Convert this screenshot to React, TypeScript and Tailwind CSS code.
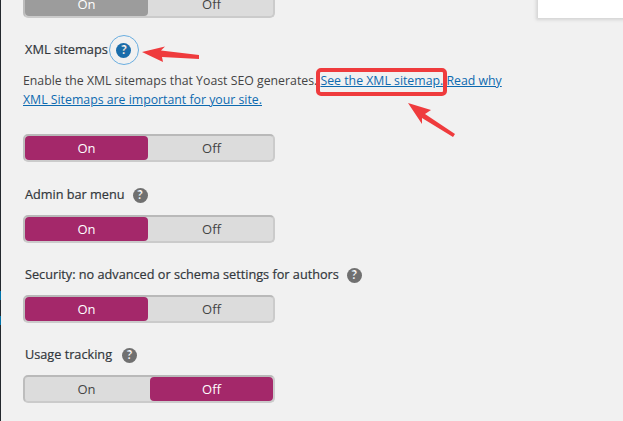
const Help = ({ color = "#707070", size = 15 }: { color?: string; size?: number }) => (
  <span
    className="inline-flex items-center justify-center rounded-full text-white font-bold text-[11.5px] leading-none shrink-0"
    style={{ backgroundColor: color, width: size, height: size }}
  >
    ?
  </span>
);

const Toggle = ({ on = true, muted = false }: { on?: boolean; muted?: boolean }) => {
  const active = muted ? "bg-[#9c9c9c]" : "bg-[#a4286a]";
  return (
    <div className="flex h-[28px] w-[252px] rounded-[5px] bg-[#dcdcdc] border-[2px] border-[#cbcbcb] border-t-[#b9b9b9] border-l-[#bdbdbd] text-[13px] leading-[24px] text-center">
      <div className={on ? `w-[123px] rounded-[4px] text-white ${active}` : "w-[123px] text-[#444]"}>On</div>
      <div className={on ? "flex-1 pl-[2px] text-[#444]" : `flex-1 ml-[2px] rounded-[4px] text-white ${active}`}>Off</div>
    </div>
  );
};

const Setting = ({ label, on = true, gap = 8 }: { label: string; on?: boolean; gap?: number }) => (
  <section>
    <div className="flex items-center h-[20px] pl-[2px] text-[12.7px] text-[#32373c] [-webkit-text-stroke:0.2px_#32373c]" style={{ gap }}>
      <span>{label}</span>
      <Help />
    </div>
    <div className="mt-[10px]">
      <Toggle on={on} />
    </div>
  </section>
);

export default function App() {
  return (
    <div className="relative w-[623px] h-[421px] overflow-hidden bg-[#f1f1f1] font-['Open_Sans','Noto_Sans',sans-serif]">
      <div className="absolute left-0 top-0 bottom-0 w-[1px] bg-[#23282d]" />
      <div className="absolute left-0 top-[291px] h-[9px] w-[1px] bg-[#0073aa]" />
      <div className="absolute left-0 top-[316px] h-[9px] w-[1px] bg-[#0073aa]" />
      <div className="absolute right-0 top-[-2px] w-[85px] h-[20px] bg-white shadow-[0_0_3px_2px_#d4d4d4]" />

      <main className="pl-[23px] pt-0 -mt-[10px]">
        <Toggle muted />

        <section className="mt-[22px]">
          <div className="flex items-center h-[20px] pl-[2px] text-[12.8px] text-[#32373c] [-webkit-text-stroke:0.2px_#32373c]">
            <span>XML sitemaps</span>
            <span className="flex items-center justify-center w-[30px] h-[30px] rounded-full border-[1.5px] border-[#6aaee0] ml-[1px]">
              <Help color="#1a6dab" />
            </span>
          </div>
          <p className="mt-[11px] w-[490px] text-[12.3px] leading-[19px] text-[#444]">
            Enable the XML sitemaps that Yoast SEO generates.{" "}
            <a className="text-[#0d6ab0] underline">See the XML sitemap.</a>{" "}
            <a className="text-[#0d6ab0] underline">Read why XML Sitemaps are important for your site.</a>
          </p>
          <div className="mt-[25px]">
            <Toggle />
          </div>
        </section>

        <div className="mt-[23px] flex flex-col gap-[22px]">
          <Setting label="Admin bar menu" />
          <Setting label="Security: no advanced or schema settings for authors" />
          <Setting label="Usage tracking" on={false} gap={10} />
        </div>
      </main>

      <div className="absolute left-[316px] top-[68px] w-[131px] h-[28px] rounded-[5px] border-[4px] border-[#ef3b3d]" />

      <svg className="absolute left-0 top-0 pointer-events-none" width="623" height="421" viewBox="0 0 623 421">
        <path d="M142 52 L165 46.5 L161 50.5 L199 55 L199 59 L162 57 L163 62 Z" fill="#ef3b3d" />
        <path d="M408 103 L431 110 L425 114 L455 134 L453 137 L422 118 L422 124 Z" fill="#ef3b3d" />
      </svg>
    </div>
  );
}
